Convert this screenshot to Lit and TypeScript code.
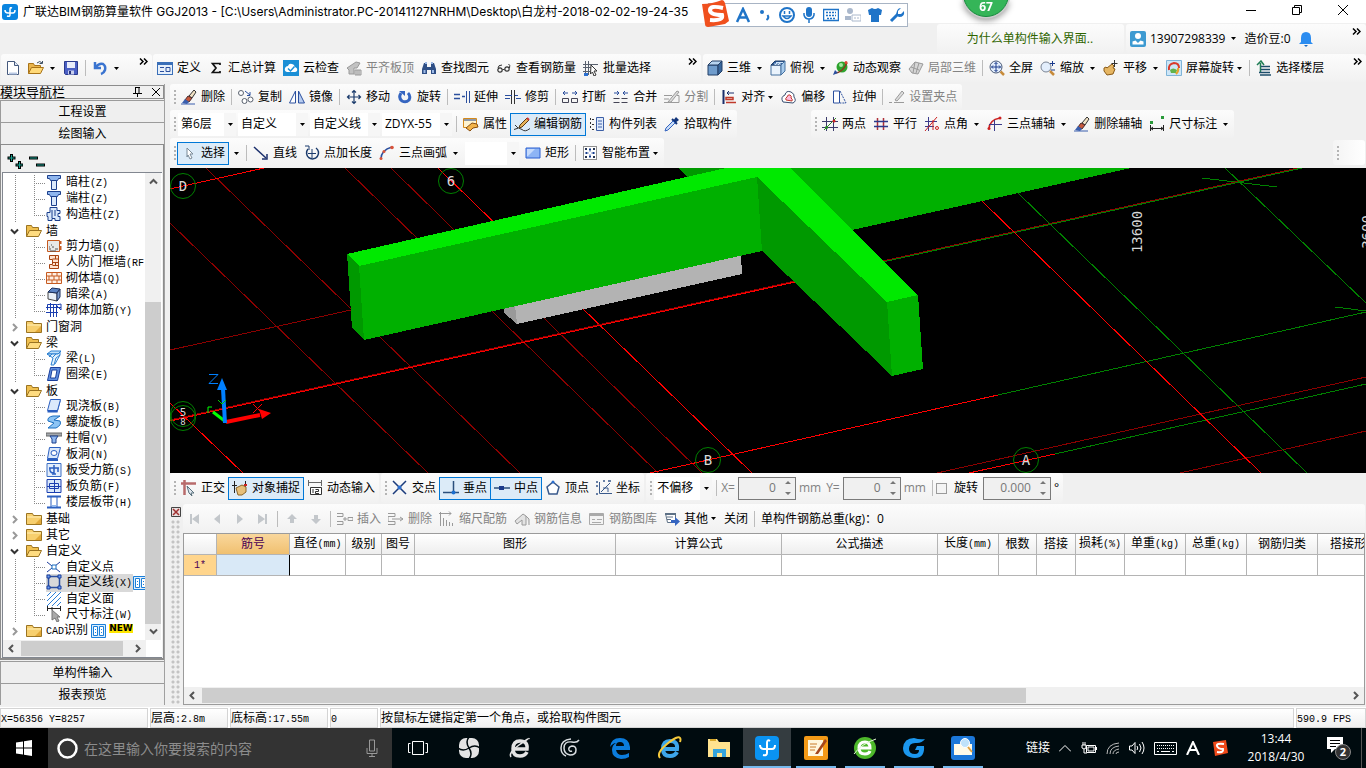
import { LitElement, html, svg, css, nothing } from "lit";
import { customElement } from "lit/decorators.js";
import { classMap } from "lit/directives/class-map.js";

const B = "#2b4f9e";
const G = "#9a9a9a";

const glyphs: Record<string, unknown> = {
  newdoc: svg`<path d="M2.500 1.500h7l4 4v9h-11z" fill="#fff" stroke="#44587c"/><path d="M9.500 1.500v4h4" fill="#dfe8f5" stroke="#44587c"/><path d="M4 13.500h8" stroke="#b9c9e4" stroke-width="2"/>`,
  open: svg`<path d="M.5 13.500v-10h5l1 2h6v3" fill="#e9b44c" stroke="#a87318"/><path d="M.5 13.500l3-6h12l-3 6z" fill="#ffd978" stroke="#a87318"/><path d="M9 3q3-3 5 0M14.500 1v2.500h-3" fill="none" stroke="#3d4f63"/>`,
  save: svg`<path d="M1.500 1.500h13v13h-12l-1-1z" fill="#4a5fc4" stroke="#2b3a8c"/><path d="M4 2h8v6H4z" fill="#e8ecfa"/><path d="M5 10.500h6v4H5z" fill="#c9d0ee"/><path d="M6 11h2v3H6z" fill="#26337c"/>`,
  undo: svg`<path d="M3 2v6h6" fill="none" stroke="#3a74d0" stroke-width="2.500"/><path d="M4 7q3-4 7-3 3 2 2 6-1 3-4 4" fill="none" stroke="#3a74d0" stroke-width="2.500"/>`,
  define: svg`<path d="M0 2h16v13H0z" fill="#3a6fb8"/><path d="M1 5h14v9H1z" fill="#e6effa"/><path d="M3 7.500h4M3 11.500h4M9 7.500h4v4H9z" stroke="#2b4f9e" fill="none"/>`,
  sigma: svg`<path d="M12 5V3.500H4.500L8 8l-3.500 4.500H12V11" fill="none" stroke="#111" stroke-width="1.700"/>`,
  cloud: svg`<path d="M0 0h16v16H0z" fill="#1b8fd6"/><path d="M4 12q-3-1-2-4 1-2 3-2 1-3 4-2 2 0 3 3 3 1 2 4-1 1-2 1z" fill="#fff"/><path d="M5 8.500l2.500 2.500 4-4.500" stroke="#1b8fd6" stroke-width="1.500" fill="none"/>`,
  slab: svg`<path d="M1 8l9-6 4 1-3 5H8v6H3v-4z" fill="#c2c2c2" stroke="${G}"/><path d="M9 10h6v5H9zM11 10v5M13 10v5" fill="#ddd" stroke="${G}"/>`,
  bino: svg`<path d="M3 3h3v4h4V3h3l2 6v5h-5v-4H6v4H1V9z" fill="#2f4f86"/><path d="M2.500 10h2v3h-2zM11 10h2v3h-2zM4 2h2v2H4zM10 2h2v2h-2z" fill="#9db9e6"/>`,
  glasses: svg`<circle cx="4" cy="10" r="2.200" fill="none" stroke="#333" stroke-width="1.200"/><circle cx="11" cy="9" r="2.200" fill="none" stroke="#333" stroke-width="1.200"/><path d="M6.500 9.500h2M2 8q0-3 4-3M13.500 8q1-3-1-4" fill="none" stroke="#333"/>`,
  batch: svg`<path d="M2.500 1v14M5.500 1v14M0 4.500h15M0 7.500h8M0 11.500h7" stroke="#59616e" fill="none"/><path d="M1 13h4v3H1z" fill="#2b6fd0"/><path d="M8 5l6 6h-3l2 4-2 1-1.500-4-2 2z" fill="#fff" stroke="#333"/>`,
  cube: svg`<path d="M1 5h10v10H1z" fill="#6f9ccc" stroke="#223f66"/><path d="M1 5l4-4h10l-4 4z" fill="#b7d4f0" stroke="#223f66"/><path d="M11 5l4-4v10l-4 4z" fill="#39679c" stroke="#223f66"/>`,
  cubetop: svg`<path d="M1 5h10v10H1z" fill="#eaf3fc" stroke="#44709f"/><path d="M1 5l4-4h10l-4 4z" fill="#2f5f9e" stroke="#223f66"/><path d="M4 4h7M6 2.500h7M5 5l3-3M8 5l3-3" stroke="#cfe3f7"/><path d="M11 5l4-4v10l-4 4z" fill="#a8cbec" stroke="#44709f"/>`,
  orbit: svg`<circle cx="9" cy="7" r="5.500" fill="#2da32d"/><circle cx="8" cy="5" r="2" fill="#a5e8a0"/><path d="M2 13Q9 13 14 3" fill="none" stroke="#8b3a1a" stroke-width="1.500"/><path d="M0 15l2-5 3 3z" fill="#2b4f9e"/><circle cx="13" cy="2.500" r="1.500" fill="#d43"/>`,
  part3d: svg`<path d="M1 9l6-7 8 2-5 10-6-1z" fill="#d6d6d6" stroke="${G}"/><path d="M3 7l8 3M7 2l-2 11M11 3L8 13" stroke="${G}" fill="none"/>`,
  full: svg`<circle cx="7" cy="7" r="6" fill="#e3eefc" stroke="#4a5a78"/><path d="M7 2.500v9M2.500 7h9M5.500 4L7 2.500 8.500 4M5.500 10L7 11.500 8.500 10M4 5.500L2.500 7 4 8.500M10 5.500L11.500 7 10 8.500" fill="none" stroke="#1b3b8c"/><path d="M11.500 11.500L15 15" stroke="#c78b3b" stroke-width="2.500"/>`,
  zoom: svg`<circle cx="6" cy="7" r="5" fill="#e3eefc" stroke="#7a8494"/><path d="M10 11l4 4" stroke="#c78b3b" stroke-width="2.500"/><path d="M10 3.500h5M12.500 1v5M11 10h4" stroke="#1b3b8c"/>`,
  pan: svg`<path d="M1 8l2-1 1 1 5-4 2 2-1 2 2 1-2 5-6 1-3-4z" fill="#e6b663" stroke="#8a5a16"/><path d="M11.500 0v7M8.500 3.500h6" stroke="#333"/>`,
  rotscr: svg`<path d="M.5.5h15v15H.5z" fill="#cde6f7" stroke="#7fb4d8"/><path d="M3 10q-1-6 5-7 5 0 5 5" stroke="#d93a2b" stroke-width="2" fill="none"/><path d="M4 10q3-3 7 0l-1 3H5z" fill="#62b34a"/><path d="M12 8q1 3-2 6" stroke="#e8a22a" stroke-width="2" fill="none"/>`,
  floors: svg`<path d="M1 5l4-4 3 4M4.500 3v10" fill="none" stroke="#1f7d55" stroke-width="1.500"/><path d="M5 6.500h9M5 9.500h9M3 12.500h11M4 15h11" stroke="#1d4d6b" stroke-width="1.500"/>`,
  erase: svg`<path d="M8 7l5-6 2 2-4 6z" fill="#f2e2c4" stroke="#333"/><path d="M4 11l3-4 4 2-3 4z" fill="#c7583c" stroke="#4a2c2c"/><path d="M1 14l3-4 4 3-2 2z" fill="#3a5fae"/><path d="M0 15h14" stroke="#3a5fae"/>`,
  copy: svg`<circle cx="3" cy="4" r="2.500" fill="#fff" stroke="#59616e"/><circle cx="6.500" cy="12" r="2.500" fill="#fff" stroke="#59616e"/><circle cx="12.500" cy="10.500" r="2.500" fill="#fff" stroke="#59616e"/><path d="M7 2l5 4M12 3v3.500H9" stroke="${B}" fill="none"/>`,
  mirror: svg`<path d="M6.500 2v12h-6z" fill="#fff" stroke="${B}"/><path d="M9.500 2v12h6z" fill="#b8cdf0" stroke="${B}"/>`,
  move: svg`<path d="M8 2v12M2 8h12M6 3.500l2-2 2 2M6 12.500l2 2 2-2M3.500 6l-2 2 2 2M12.500 6l2 2-2 2" fill="none" stroke="#1b3b6c" stroke-width="1.200"/>`,
  rotate: svg`<path d="M4 4q-3 5 1 8 4 2 7-1 2-4-1-7" fill="none" stroke="#3565c0" stroke-width="3"/><path d="M2 2h6v5z" fill="#3565c0"/>`,
  extend: svg`<path d="M0 5.500h6M0 9.500h6M8 7.500h3" stroke="${B}" stroke-width="1.500"/><path d="M12.500 2v12M15.500 2v12" stroke="${B}"/>`,
  trim: svg`<path d="M6.500 1v14M9.500 1v14" stroke="#333"/><path d="M0 6.500h7M0 9.500h5M10 6.500h3M11 9.500h5" stroke="${B}"/>`,
  brk: svg`<path d="M1 4h5M10 4h5M3 2L1 4l2 2M13 2l2 2-2 2" stroke="${B}" fill="none"/><path d="M.5 9.500h6v4h-6zM9.500 9.500h6v4h-6z" fill="none" stroke="#445"/>`,
  merge: svg`<path d="M1 4h5M10 4h5M4 2l2 2-2 2M12 2l-2 2 2 2" stroke="${B}" fill="none"/><path d="M.5 9.500h15M.5 13.500h15" fill="none" stroke="#445" stroke-dasharray="6 2"/>`,
  split: svg`<path d="M0 6.500h8M0 13.500h15V6.500h-2M0 10h5" fill="none" stroke="${G}"/><path d="M4 13L13 2l2 1L7 13z" fill="#ddd" stroke="${G}"/>`,
  align: svg`<path d="M2.500 1v14" stroke="#1b2f6c" stroke-width="2"/><path d="M6 4h7M8 2L6 4l2 2" fill="none" stroke="#1b2f6c"/><path d="M5 8.500h7v2H5zM5 13.500h10" fill="none" stroke="#c0392b" stroke-width="1.500"/>`,
  offset: svg`<path d="M2 13q-3-5 2-7 1-5 6-3 4 2 3 5 3 4-1 6z" fill="#fff" stroke="#394e70"/><path d="M5 11q-1-2 1-3 1-3 3-2 2 1 1 3 2 1 1 3z" fill="#fbd" stroke="#c0392b"/>`,
  stretch: svg`<path d="M1.500 2h6v12h-6z" fill="#fff" stroke="${B}"/><path d="M8 2l6 12H8" fill="none" stroke="${B}" stroke-dasharray="2 1"/>`,
  grip: svg`<path d="M0 13.500h3M5 13.500h10" stroke="${G}"/><path d="M6 11l7-9 2 2-7 8z" fill="#ddd" stroke="${G}"/>`,
  prop: svg`<path d="M.5 2.500h13v9H.5z" fill="#fff4d0" stroke="#d58a1c"/><path d="M1 3h12v2H1z" fill="#8d98a8"/><path d="M3 12l6-5 5 1 1 3-5 1-3 3z" fill="#f3b44a" stroke="#8a4f10"/>`,
  pencil: svg`<path d="M0 13.500q5-3 8 0t8-1" fill="none" stroke="#333"/><path d="M1 9l3 3" stroke="#333"/><path d="M6 9l7-7 2 2-7 7-3 1z" fill="#e8b35a" stroke="#5a3b12"/><path d="M13 2l2 2" stroke="#c33" stroke-width="2"/>`,
  list: svg`<path d="M1.500 2v12" stroke="#333" stroke-dasharray="2 2"/><path d="M3 3.500h2M3 8.500h2M3 13.500h2" stroke="#333"/><path d="M7.500 1.500h7v13h-7z" fill="#dfeafb" stroke="#3c5fa6"/><path d="M9 5h4M9 8h4M9 11h4" stroke="#3c5fa6"/>`,
  picker: svg`<path d="M9 5l3-4 3 3-4 3z" fill="#12357a"/><path d="M8 3l5 5" stroke="#12357a" stroke-width="2"/><path d="M9 5L2 12l-1 3 3-1 7-7z" fill="#c9ddf8" stroke="#3565c0"/>`,
  twopt: svg`<path d="M4.500 1v14M11.500 1v14M0 5.500h16M0 11.500h16" stroke="#3b3b6b"/><path d="M2 14L14 2" stroke="#2a8a2a"/><circle cx="4.500" cy="11.500" r="1.500" fill="#2a8a2a"/><circle cx="12" cy="5" r="1.500" fill="#c22"/>`,
  parallel: svg`<path d="M4.500 2v12M10.500 2v12" stroke="#b0303a" stroke-width="1.500"/><path d="M1 5.500h14M1 10.500h14" stroke="#2b3a8c" stroke-width="1.500"/>`,
  ptangle: svg`<path d="M4.500 1v14M1 5.500h12M1 10.500h9" stroke="#3b3b8b"/><path d="M1 15L13 1M9 4v10" stroke="#c22"/><circle cx="13" cy="12" r="1.500" fill="none" stroke="#c22"/>`,
  threept: svg`<path d="M2 13q0-9 11-11" stroke="#c22" fill="none" stroke-width="1.500"/><path d="M7.500 4v11M2 8.500h13" stroke="#3b3b8b"/><circle cx="13" cy="2" r="1.500" fill="#c22"/><circle cx="2" cy="12.500" r="1.500" fill="#c22"/>`,
  dim: svg`<path d="M1.500 9v6M14.500 9v6M2 12.500h12M4 11l-2 1.500L4 14M12 11l2 1.500-2 1.500" stroke="#222" fill="none"/><path d="M1 5h3v3H1zM12 0h3v3h-3z" fill="#2a9a3a"/>`,
  arrow: svg`<path d="M6 3l6 6H9l2 4-2 1-2-4-1 2z" fill="#fff" stroke="#7a8a98"/>`,
  line: svg`<path d="M1 2l12 11" stroke="#1b2f6c" stroke-width="1.500"/><path d="M14 9v5H9" fill="none" stroke="#1b2f6c" stroke-width="1.500"/>`,
  ptlen: svg`<path d="M4 4a6 6 0 1 0 8-1" fill="none" stroke="#1b3b6c" stroke-width="1.500"/><path d="M1 1h4v4M8 4v9M4 8.500h8" fill="none" stroke="#1b3b6c"/>`,
  arc: svg`<path d="M2 14q0-9 11-12" stroke="#2b4f9e" fill="none" stroke-width="1.500"/><circle cx="13" cy="2.500" r="1.800" fill="#d8533a"/><circle cx="5" cy="6.500" r="1.500" fill="#d8533a"/><circle cx="2" cy="13.500" r="1.500" fill="#d8533a"/>`,
  rect: svg`<path d="M1 3h14v10H1z" fill="#8db4f5" stroke="#2b5fd0"/><path d="M2 4h8L3 11H2z" fill="#c5dafc"/>`,
  smart: svg`<path d="M1.500 1.500h13v13h-13z" fill="#fff" stroke="#222" stroke-dasharray="1 1"/><path d="M8 3v3.500M8 9.500V13M3 8h3.500M9.500 8H13M7 4.500h2M7 11.500h2M4.500 7v2M11.500 7v2" stroke="#123a8c"/><path d="M3 3h2v2H3zM11 3h2v2h-2zM3 11h2v2H3zM11 11h2v2h-2z" fill="#24324f"/>`,
  ortho: svg`<path d="M0 3.500h15M3.500 0v15" stroke="#b86b6b" stroke-width="2.500"/><path d="M6 6l7 7h-3l1 3-3-3z" fill="#dfe6ee" stroke="#59707c"/>`,
  snap: svg`<path d="M0 5.500h5M2.500 1v12M13.500 1v7" stroke="#222"/><path d="M4 8l6-3 4 2v5l-4 3H6z" fill="#e6bf7a" stroke="#8a6427"/><path d="M12 5h3" stroke="#c22" stroke-width="2"/>`,
  dyn: svg`<path d="M1 2.500h13M1.500 0v6M14.500 0v6" stroke="#666"/><path d="M3.500 7.500h11v7h-11z" fill="#fff" stroke="#333"/><path d="M6 9v4M8.500 9.500h3v2h-3v2h3.500" stroke="#333" fill="none"/>`,
  cross: svg`<path d="M1 1l13 13M14 1L1 14" stroke="#1b3b7c" stroke-width="1.500"/><circle cx="7.500" cy="7.500" r="2" fill="#2b6fd0"/>`,
  perp: svg`<path d="M10.500 1v11M0 12.500h16" stroke="#2b4f7c" stroke-width="1.500"/><circle cx="10.500" cy="12.500" r="2" fill="#1b6fd0"/>`,
  mid: svg`<path d="M0 8h16" stroke="#2b4f7c" stroke-width="1.500"/><path d="M5 6h5v4H5z" fill="#1b3b8c"/>`,
  vertex: svg`<path d="M8 2l6 5-2 7H4L2 7z" fill="#fff" stroke="#3a5a8c" stroke-width="1.500"/><circle cx="8" cy="2" r="1.500" fill="#2b6fd0"/>`,
  coord: svg`<path d="M3.500 2v11.500H16M5 12l9-9M7 8h5v4" fill="none" stroke="#3a5a8c"/><path d="M0 2h2M0 6h2M0 14h2M7 1h2M12 1h3" stroke="#3a5a8c" stroke-width="1.500"/>`,
  first: svg`<path d="M4 3h2v10H4zM13 3v10L6 8z" fill="#c3c7cb"/>`,
  prev: svg`<path d="M11 3v10L5 8z" fill="#c3c7cb"/>`,
  next: svg`<path d="M5 3v10l6-5z" fill="#c3c7cb"/>`,
  last: svg`<path d="M10 3h2v10h-2zM3 3v10l7-5z" fill="#c3c7cb"/>`,
  up: svg`<path d="M8 3l5 5h-3v4H6V8H3z" fill="#c3c7cb"/>`,
  down: svg`<path d="M8 13l5-5h-3V4H6v4H3z" fill="#c3c7cb"/>`,
  insrow: svg`<path d="M0 2.500h6v3H0M0 10.500h6v3H0M6 8h4M8 6v4M11 6.500h5v3h-5z" fill="none" stroke="${G}"/>`,
  delrow: svg`<path d="M0 2.500h7v3H0M0 10.500h7v3H0M0 5.500v5M4 8h11M12 6l3 2-3 2" fill="none" stroke="${G}"/>`,
  scale: svg`<path d="M1.500 1v14M0 2.500h12M10 .5l2 2-2 2" fill="none" stroke="${G}"/><path d="M4.500 7v8M7.500 9v6M10.500 11v4M13.500 12v3" stroke="${G}"/>`,
  info: svg`<path d="M1 10l8-7 3 2v9H8V9L3 13zM12 5l3 3v6" fill="#e3e3e3" stroke="${G}"/>`,
  lib: svg`<path d="M.5 2.500h14v11H.5z" fill="#f3f3f3" stroke="#aaa"/><path d="M1 4h13" stroke="#aaa" stroke-width="2"/><path d="M3 8.500h3M8 8.500h5M3 11.500h9" stroke="#aaa"/>`,
  other: svg`<path d="M1.500 2.500h10v9h-8z" fill="#fff" stroke="#5e7186"/><path d="M1 3h11" stroke="#5e7186" stroke-width="2"/><path d="M3 6h6M3 8.500h4" stroke="#5e7186"/><path d="M7 9h4V6l5 4.500L11 15v-3H7z" fill="#3565c0"/>`,
  user: svg`<rect width="16" height="16" rx="2" fill="#3d9ad1"/><circle cx="8" cy="5" r="3" fill="#fff"/><path d="M2.500 13.500v-3l3-1L8 12l2.500-2.500 3 1v3z" fill="#fff"/>`,
  bell: svg`<path d="M8 1q5 0 5 6v4l2 2H1l2-2V7q0-6 5-6z" fill="#2b8cf0"/><path d="M6 14h4l-2 2z" fill="#1769c4"/>`,
  folder: svg`<path d="M.5 13.500v-11h6l1 2h8v9z" fill="#f7cf6e" stroke="#9b7422"/><path d="M1 6h14" stroke="#fff0b8"/><path d="M9 13l6-6v6z" fill="#e2a93a"/>`,
  folderopen: svg`<path d="M.5 13.500v-11h5l1 2h6v3" fill="#f0c050" stroke="#9b7422"/><path d="M.5 13.500l3-6h12l-3 6z" fill="#ffdc80" stroke="#9b7422"/>`,
  col: svg`<path d="M1.500 1.500h13v3h-2l-1 2h-7l-1-2h-2z" fill="#8fb6ee" stroke="#1b3f8c"/><path d="M5.500 6.500h5v9h-5z" fill="#dbe9fb" stroke="#1b3f8c"/>`,
  gear: svg`<path d="M4 1.500h7v3h3v3h-2v3h2v4H9v-2H6v2H2v-4H1v-4h3z" fill="#dbe9fb" stroke="#1b3f8c"/><path d="M6 4v8M9 4v6" stroke="#1b3f8c"/>`,
  shear: svg`<path d="M1.500 2.500h12v11h-12z" fill="#e8e8e8" stroke="#c65a20"/><path d="M3 11h2M6 9h2M4 13h6M9 11h3M5 7h1M3 9h1" stroke="#555"/><path d="M14.500 3v3M14.500 8v4" stroke="#c65a20" stroke-width="2"/>`,
  door: svg`<path d="M3.500 1.500h9v13h-9v-4h3v-5h-3z" fill="#ffe3cf" stroke="#a84310"/><path d="M6.500 5h6M7 8.500h5M6.500 11.500h6M9.500 2v3M9.500 9v3" stroke="#a84310"/>`,
  brick: svg`<path d="M.5 2.500h15v11H.5z" fill="#fff0e4" stroke="#c65a20"/><path d="M1 6h14M1 10h14M6 2v4M11 2v4M3 6v4M8 6v4M13 6v4M6 10v4M11 10v4" stroke="#c65a20"/>`,
  hidbeam: svg`<path d="M2 6l9 1v8l-9-2z" fill="#e9f0f8" stroke="#444"/><path d="M2 6l4-4 8 1-3 4z" fill="#5b84c4" stroke="#1b2f5c"/><path d="M11 7l3-4v8l-3 4z" fill="#7b9ccf" stroke="#1b2f5c"/>`,
  rebar: svg`<path d="M1.500 8V2.500h9V8M0 5.500h15M4.500 1v14M0 10.500h12M10.500 3v12M7.500 3v12" stroke="#1b3fb0" fill="none"/><path d="M10 3l5 5V2z" fill="none" stroke="#1b3fb0"/>`,
  beam: svg`<path d="M1 4l4-3h10l-3 3z" fill="#bfe0fa" stroke="#2b7fd0"/><path d="M1 4h11l2-2v3l-4 3-2 7H5l2-7z" fill="#e3f2fd" stroke="#2b7fd0"/><path d="M3 7l3-3M7 7l3-3M9 14l5-9" stroke="#2b7fd0"/>`,
  ring: svg`<path d="M4.500 1.500h10l-3 13h-10z" fill="#5f8fdf" stroke="#1b3f9c"/><path d="M6 4h5l-1.500 8h-5z" fill="#fff" stroke="#1b3f9c"/>`,
  plate: svg`<path d="M4.500 1.500h10l-3 11h-10z" fill="#dbe9fb" stroke="#2b5fc0"/><path d="M1.500 12.500h10l3-11v2l-3 11h-10z" fill="#2b5fc0"/>`,
  spiral: svg`<path d="M14 2H7q-6 1-5 5l6 2-6 5h8q6-3 4-7L8 6z" fill="#8cc4f4" stroke="#1b6fc0"/>`,
  cap: svg`<path d="M0 3h16v3H0z" fill="#a4a9ae" stroke="#666"/><path d="M4 6h8l-2 3v4H6V9z" fill="#8fb6ee" stroke="#1b3f8c"/>`,
  hole: svg`<path d="M3.500 1.500h11l-3 11h-10z" fill="#dbe9fb" stroke="#2b5fc0"/><ellipse cx="8" cy="7" rx="3" ry="2.500" fill="#fff" stroke="#2b5fc0"/><path d="M1 14h11" stroke="#2b5fc0" stroke-width="2"/>`,
  force: svg`<path d="M1 1.500h14v13H1z" fill="#e3eefc" stroke="#3c6fc4"/><path d="M3 6h10M8 3v9M4 6q-1 5 4 5M12 6v4M6 12h4" fill="none" stroke="#2b5fc0" stroke-width="1.500"/>`,
  neg: svg`<path d="M1 1.500h14v13H1z" fill="#dbe9fb" stroke="#1b3fb0"/><path d="M3.500 5.500h9v5h-9zM8.500 2v12M1 8.500h14" fill="none" stroke="#1b3fb0"/>`,
  strip: svg`<path d="M1 2.500h14M1 13.500h14" stroke="#2b5fc0" stroke-width="2"/><path d="M5 3v10M11 3v10" stroke="#2b5fc0"/><path d="M6 11h4v2H6z" fill="#8fb6ee"/>`,
  cpoint: svg`<path d="M1 3l5 4M14 3L9 7M1 13l5-4M14 13L9 9" stroke="#1b3b9c"/><path d="M6 6h4v4H6z" fill="#fff" stroke="#1b6fc0"/>`,
  cline: svg`<path d="M2.500 2.500h11v11h-11z" fill="none" stroke="#2b4fa0" stroke-width="1.500"/><path d="M1 1h3v3H1zM12 1h3v3h-3zM1 12h3v3H1zM12 12h3v3h-3z" fill="#6f9ff0" stroke="#1b3f9c"/>`,
  cface: svg`<path d="M1 5l4-4M1 10l9-9M1 15L15 1M6 15l9-9M11 15l4-4" stroke="#2b7fd8" fill="none"/>`,
  cdim: svg`<path d="M1.500 0v5M14.500 0v5M2 2.500h12M6 1v3" stroke="#222"/><path d="M6 4l8 7h-3l2 4-2 1-2-4-3 2z" fill="#aaa" stroke="#777"/>`,
  video: svg`<path d="M.5 1.500h14v13H.5z" fill="#dceefe" stroke="#1b7fd8"/><path d="M2.500 3.500h4v9h-4zM8.500 3.500h4v9h-4z" fill="#fff" stroke="#1b7fd8"/><path d="M4 6.500h1M10 6.500h1M4 9.500h1M10 9.500h1" stroke="#1b7fd8"/>`,
  plus: svg`<path d="M4.500 1v8M.5 5h8M12.500 8v8M8.500 12h8" stroke="#000" stroke-width="3"/><path d="M4.500 2v6M1.500 5h6M12.500 9v6M9.500 12h6" stroke="#18a090"/>`,
  minus: svg`<path d="M0 5h9M7 12h9" stroke="#000" stroke-width="3"/><path d="M1 5h7M8 12h7" stroke="#18a090"/>`,
};

const icon = (name: string, size = 16) =>
  html`<svg class="ic" width=${size} height=${size} viewBox="0 0 16 16" aria-hidden="true">${glyphs[name]}</svg>`;

const tri = html`<svg class="tri" width="5" height="3" viewBox="0 0 5 3" aria-hidden="true"><path d="M0 0h5L2.500 3z" fill="#000" /></svg>`;
const more = html`<button class="more" aria-label="更多"><svg width="9" height="7" viewBox="0 0 9 7"><path d="M1 .5l3 3-3 3M5 .5l3 3-3 3" fill="none" stroke="#000" stroke-width="1.500" /></svg></button>`;
const sep = html`<i class="sep"></i>`;
const dots = html`<i class="dots"></i>`;

interface Opt { on?: boolean; off?: boolean; drop?: boolean; tight?: boolean }

const tool = (ic: string, label: string, o: Opt = {}) => html`
  <button class=${classMap({ tool: true, on: !!o.on })} ?disabled=${o.off}>
    ${icon(ic)}<span>${label}</span>${o.tight ? html`<span class="dd">${tri}</span>` : nothing}
  </button>${o.drop ? drop(label) : nothing}`;

const drop = (label: string) => html`<button class="dd" aria-label=${label + "选项"}>${tri}</button>`;

const combo = (label: string, value: string, cls = "") => html`
  <span class="combo ${cls}"><select aria-label=${label}><option>${value}</option></select><i>${tri}</i></span>`;

const half = (t: string) =>
  t.split(/([\x20-\x7e]+)/).map((p) => (/^[\x20-\x7e]/.test(p) ? html`<span class="m">${p}</span>` : p));

const chevron = (d: string, c = "#555") =>
  html`<svg width="9" height="9" viewBox="0 0 9 9" aria-hidden="true"><path d=${d} fill="none" stroke=${c} stroke-width="2" /></svg>`;
const UP = "M1 6.500L4.500 3 8 6.500", DOWN = "M1 2.500L4.500 6 8 2.500", LEFT = "M6 1L2.500 4.500 6 8", RIGHT = "M3 1l3.500 3.500L3 8";

type Node = [string, string, ("open" | "shut" | "leaf" | "end")];
const TREE: Node[] = [
  ["暗柱(Z)", "col", "leaf"], ["端柱(Z)", "col", "leaf"], ["构造柱(Z)", "gear", "end"],
  ["墙", "", "open"], ["剪力墙(Q)", "shear", "leaf"], ["人防门框墙(RF", "door", "leaf"], ["砌体墙(Q)", "brick", "leaf"],
  ["暗梁(A)", "hidbeam", "leaf"], ["砌体加筋(Y)", "rebar", "end"],
  ["门窗洞", "", "shut"], ["梁", "", "open"], ["梁(L)", "beam", "leaf"], ["圈梁(E)", "ring", "end"],
  ["板", "", "open"], ["现浇板(B)", "plate", "leaf"], ["螺旋板(B)", "spiral", "leaf"], ["柱帽(V)", "cap", "leaf"],
  ["板洞(N)", "hole", "leaf"], ["板受力筋(S)", "force", "leaf"], ["板负筋(F)", "neg", "leaf"], ["楼层板带(H)", "strip", "end"],
  ["基础", "", "shut"], ["其它", "", "shut"], ["自定义", "", "open"],
  ["自定义点", "cpoint", "leaf"], ["自定义线(X)", "cline", "leaf"], ["自定义面", "cface", "leaf"], ["尺寸标注(W)", "cdim", "end"],
  ["CAD识别", "", "shut"],
];

const COLS: [string, number][] = [
  ["", 33], ["筋号", 73], ["直径(mm)", 56], ["级别", 36], ["图号", 33], ["图形", 201], ["计算公式", 166], ["公式描述", 156],
  ["长度(mm)", 61], ["根数", 38], ["搭接", 39], ["损耗(%)", 49], ["单重(kg)", 61], ["总重(kg)", 61], ["钢筋归类", 71], ["搭接形式", 73],
];

@customElement("app-root")
export class AppRoot extends LitElement {
  static styles = css`
    :host {
      display: flex; flex-direction: column; height: 100vh; min-height: 600px; overflow: hidden; position: relative;
      background: #f0f0f0; color: #000;
      font: 12px/16px "Open Sans", "Noto Sans CJK SC", sans-serif;
    }
    * { box-sizing: border-box; }
    svg { display: block; flex: none; }
    button { font: inherit; color: inherit; background: none; border: 0; padding: 0; white-space: nowrap; }
    button:disabled { color: #838383; }
    i { font-style: normal; }
    .m { font-family: "Liberation Mono", monospace; font-size: 10px; white-space: pre; }

    .title { display: flex; align-items: center; height: 23px; background: #fff; padding-left: 2px; flex: none; }
    .title h1 { font: 12px/16px Inter, "Noto Sans CJK SC", sans-serif; margin: 0 0 0 5px; flex: 1; white-space: nowrap; }
    .win { display: grid; place-items: center; width: 46px; height: 20px; align-self: start; }

    .row { display: flex; flex: none; }
    .r0 { height: 30px; padding-top: 1px; justify-content: flex-end; gap: 2px; }
    .r1 { height: 31px; padding: 1px 0 2px 1px; gap: 1px; }
    .r2 { height: 26px; } .r3 { height: 28px; gap: 74px; } .r4 { height: 30px; justify-content: space-between; }
    .bar {
      display: flex; align-items: center; gap: 7px; padding: 0 5px 0 4px; border-radius: 3px;
      background: linear-gradient(#fcfcfc, #f1f1f1); white-space: nowrap;
    }
    .b1 { width: 151px; } .b2 { width: 548px; } .grow { flex: 1; }
    .b1, .b2, .grow { padding-right: 4px; }
    .b3 { margin-left: 1px; }
    .acct .more, .grow .more, .b1 .more, .b2 .more { margin-left: auto; }
    .hint { width: 187px; justify-content: center; color: #2f6500; }
    .acct { width: 240px; }
    .more { align-self: flex-start; padding-top: 4px; }
    .tool { display: flex; align-items: center; gap: 4px; height: 23px; }
    .on { background: #dcebf8; border: 1px solid #0078d7; padding: 0 3px; margin: 0 -4px; }
    .on + .dd { margin-left: 0; }
    .dd { display: grid; place-items: center; width: 8px; height: 20px; margin-left: -3px; }
    .sep { width: 1px; height: 16px; background: #bcbcbc; margin: 0 -1px; flex: none; }
    .dots { width: 2px; height: 14px; margin-right: -2px; flex: none; background: repeating-linear-gradient(#b4b4b4 0 2px, transparent 2px 4px); }
    .combos { display: flex; gap: 2px; margin: 0 -2px 0 -3px; }
    .combo { display: flex; width: 70px; height: 23px; background: #fff; }
    .combo select { appearance: none; border: 0; background: none; flex: 1; min-width: 0; padding: 0 0 0 3px; font: inherit; color: inherit; }
    .combo i { display: grid; place-items: center; width: 12px; background: #f6f6f6; }
    .c58 { width: 58px; } .c54 { width: 54px; margin: 0 -1px; }

    .body { display: flex; flex: 1; min-height: 0; padding-bottom: 2px; }
    .side { width: 165px; flex: none; display: flex; flex-direction: column; border-right: 1px solid #a0a0a0; }
    .side h2 { display: flex; align-items: center; gap: 10px; margin: 1px 0; height: 14px; font: 13px/14px "Noto Sans CJK SC", sans-serif; border: 1px solid #8c8c8c; border-left: 0; padding-right: 3px; }
    .side h2 span { flex: 1; line-height: 12px; }
    .side .tab { height: 22px; line-height: 20px; border: 1px solid #9b9b9b; border-right: 0; border-bottom: 0; background: #efefef; flex: none; }
    .pane { flex: 1; min-height: 0; border: 1px solid #8c8c8c; border-width: 1px 1px 2px; margin-bottom: 1px; padding: 0 1px; display: flex; flex-direction: column; }
    .pm { display: flex; gap: 6px; height: 27px; padding: 4px 0 0 5px; flex: none; }
    .box { flex: 1; min-height: 0; background: #fff; border: 1px solid #828790; border-right: 0; display: flex; flex-direction: column; }
    .split { flex: 1; display: flex; min-height: 0; }
    .tree { flex: 1; margin: 0; padding: 2px 0 0; list-style: none; overflow: hidden; }
    .tree li { display: flex; height: 16px; align-items: center; white-space: nowrap; }
    .tree li > svg + span, .tree .leaf { display: flex; gap: 4px; }
    .tree .leaf > span { display: block; }
    .tree li > svg:nth-child(2) + span { padding-left: 4px; }
    .tree .leaf.sel { padding-right: 1px; background: #d9d9d9; }
    .exp { width: 23px; padding-left: 7px; }
    .new { font: bold 9px/9px "DejaVu Sans", sans-serif; background: #ffe600; margin: -6px 0 0 2px; }
    .vs { width: 16px; margin-right: 1px; background: #f0f0f0; display: flex; flex-direction: column; align-items: center; justify-content: space-between; padding: 4px 0; }
    .vs i { width: 16px; flex: 1; margin-top: 116px; margin-bottom: 3px; background: #cdcdcd; }
    .hs { display: flex; align-items: center; height: 17px; background: #f0f0f0; padding: 0 4px; flex: none; }
    .hs span { flex: 1; height: 15px; margin: 0 5px; }
    .hs i { display: block; height: 15px; background: #cdcdcd; width: 72%; }
    .tree-hs { margin-right: 16px; }
    .tree-hs i { width: 95%; }

    .main { flex: 1; min-width: 0; display: flex; flex-direction: column; margin-left: 5px; }
    .stub { width: 32px; margin: 2px 1px 3px 0; background: linear-gradient(90deg, #f4f4f4, #fff); }
    .view { display: block; width: 100%; height: 305px; background: #000; }
    .snap { height: 30px; gap: 2px; margin-bottom: 1px; }
    .snap .bar { padding-right: 4px; }
    .num { display: flex; height: 23px; border: 1px solid #7a7a7a; width: 58px; background: #f0f0f0; }
    .num input { border: 0; background: none; flex: 1; min-width: 0; padding: 0; text-align: right; font: inherit; color: #777; }
    .num svg { align-self: center; margin: 0 4px 0 9px; }
    .w68 { width: 68px; margin: 0 -4px 0 -2px; }
    .axis { display: flex; align-items: center; gap: 3px; margin-left: -2px; color: #838383; }
    input[type="checkbox"] { appearance: none; width: 11px; height: 11px; border: 1px solid #9b9b9b; margin: 0; background: #f4f4f4; }
    .chk { display: flex; align-items: center; gap: 7px; margin-left: -3px; }

    .low { flex: 1; min-height: 0; display: flex; }
    .edge { width: 13px; flex: none; padding: 3px 2px 0 1px; }
    .edge svg + i { display: block; height: calc(100% - 14px); margin-top: 3px; background: radial-gradient(circle at 2px 2px, #c4c4c4 1px, transparent 2px) 0 0 / 5px 5px; }
    .grid { flex: 1; min-width: 0; display: flex; flex-direction: column; margin-right: 1px; }
    .cmd { height: 29px; flex: none; padding-left: 3px; }
    .cmd .nav { display: flex; gap: 8px; }
    .cmd .nav:first-child { gap: 7px; }
    .sheet { flex: 1; min-height: 0; background: #fff; border: 1px solid #9b9b9b; overflow: hidden; display: flex; flex-direction: column; }
    .scroll { flex: 1; overflow: hidden; }
    table { border-collapse: separate; border-spacing: 0; table-layout: fixed; width: 1207px; }
    th, td { height: 19px; padding: 0; font-weight: normal; border: solid #b4b4b4; border-width: 0 1px 1px 0; white-space: nowrap; text-align: center; line-height: 18px; }
    thead th { background: linear-gradient(#fff, #eee); height: 20px; }
    thead th.cur { background: linear-gradient(#f9d79c, #f0c070); color: #4b0055; }
    tbody th { background: #ffd58c; color: #4b0055; }
    td.cur { background: #d9e9f7; border-right-color: #000; }

    .status { display: flex; gap: 2px; height: 21px; flex: none; background: #fff; padding-top: 1px; }
    .status > span { border: 1px solid #d4d4d4; background: linear-gradient(#fff, #f0f0f0); line-height: 18px; white-space: nowrap; overflow: hidden; }
    .s148 { width: 148px; } .s78 { width: 78px; } .s98 { width: 98px; } .s48 { width: 48px; } .s70 { width: 70px; }

    .task { display: flex; height: 40px; flex: none; background: #000b0f; color: #fff; }
    .task button { display: grid; place-items: center; width: 49px; }
    .task .start { width: 48px; background: #000; }
    .search { display: flex; align-items: center; width: 344px; background: #333; padding: 0 14px 0 8px; gap: 5px; }
    .search input { flex: 1; min-width: 0; background: none; border: 0; padding: 0; font: 14px/20px "Noto Sans CJK SC", sans-serif; }
    .search input::placeholder { color: #8c8c8c; opacity: 1; }
    .task .n { width: 51px; }
    .task .act { width: 48px; }
    .run { background: linear-gradient(#76b9ed, #76b9ed) center bottom / 40px 2px no-repeat; }
    .task .act.run { background: linear-gradient(#76b9ed, #76b9ed) center bottom / 48px 2px no-repeat #343c40; }
    .tray { display: flex; align-items: center; margin-left: auto; }
    .tray > span { margin-right: 3px; }
    .task .tray button { width: 24px; height: 40px; }
    .task .tray .kb { width: 32px; }
    .task .tray .wide { width: 30px; }
    .clock { width: 82px; text-align: center; line-height: 18px; }
    .task .tray .note { width: 44px; }
    .desk { height: 40px; width: 5px; border-left: 1px solid #555; }

    .ime { position: absolute; left: 701px; top: 0; display: flex; align-items: center; height: 28px; }
    .ime .pad { display: flex; align-items: center; gap: 6px; height: 24px; width: 200px; background: #fff; border: 1px solid #a8b4c4; margin: 2px 0 0 -21px; padding-left: 26px; }
    .ime .logo { z-index: 1; }
    .ball { position: absolute; left: 960px; top: 0; filter: drop-shadow(0 2px 3px #0006); }
  `;

  private scene() {
    const D = "#8b0000", R = "#f00", N = "#008000";
    const L: [number, number, number, number, string][] = [
      [206, 168, 520, 473, D], [170, 223, 428, 473, D], [345, 168, 658, 473, D], [391, 168, 702, 473, D],
      [438, 168, 752, 473, R], [170, 403, 243, 473, R], [170, 189, 264, 168, R], [170, 350, 351, 310, D],
      [170, 420, 795, 281, D], [170, 421, 795, 282, R], [883, 261, 1302, 167, D], [883, 262, 1302, 168, N],
      [650, 473, 998, 395, R], [998, 395, 1366, 312, N], [937, 473, 1366, 377, D], [969, 473, 1055, 454, R],
      [1055, 454, 1366, 384, N], [1180, 473, 1366, 431, D], [982, 201, 1261, 473, R], [1018, 193, 1307, 473, N],
      [1225, 168, 1366, 303, N], [1202, 178, 1277, 187, N], [1335, 307, 1366, 311, N],
    ];
    const C: [number, number, string][] = [[183, 186, "D"], [451, 181, "6"], [183, 414, ""], [183, 418, ""], [708, 460, "B"], [1026, 460, "A"]];
    return html`<svg class="view" viewBox="170 168 1196 305" preserveAspectRatio="xMinYMin slice" role="img" aria-label="三维视图">
      <g shape-rendering="crispEdges">
        ${L.map(([a, b, c, d, s]) => svg`<path d="M${a} ${b}L${c} ${d}" stroke=${s} />`)}
        <path d="M678 168h60l-50 10z" fill="#009900" />
        <path d="M504 308l11-3 226-50 1 19-225 50-13-11z" fill="#b3b3b3" />
        <path d="M504 308l11-3 2 19-13-11z" fill="#999" />
        <path d="M788 168h343L852 230z" fill="#00b000" />
        <path d="M347 254L726 168h64L918 295l-31 7L757 177 359 266z" fill="#00e900" />
        <path d="M359 266l398-89 5 74-398 89z" fill="#00b000" />
        <path d="M347 254l12 12 5 74-12-12zM757 177l130 125 5 74-130-125z" fill="#009900" />
        <path d="M887 302l31-7 5 74-31 7z" fill="#00b000" />
      </g>
      <g font-family="DejaVu Sans Mono, monospace" font-size="14" fill="#d8d8d8" text-anchor="middle">
        ${C.map(([x, y, t]) => svg`<circle cx=${x} cy=${y} r="12.500" fill="none" stroke=${N} />${t ? svg`<text x=${x} y=${y + 5}>${t}</text>` : nothing}`)}
        <text x="183" y="416" font-size="11">5</text>
        <text x="183" y="425" font-size="9">8</text>
        <text transform="translate(1142 232) rotate(-90)">13600</text>
        <text transform="translate(1372 232) rotate(-90)">3600</text>
      </g>
      <path d="M226 422L213 412" stroke="#0f0" stroke-width="3" /><path d="M208 413v-6h4" stroke="#0f0" fill="none" />
      <path d="M226 422l34-7" stroke="#f00" stroke-width="4" /><path d="M271 413l-12-4 3 10z" fill="#f00" />
      <path d="M225 423l-2-34" stroke="#0080ff" stroke-width="4" /><path d="M222 378l-5 12h10z" fill="#0080ff" />
      <path d="M209 374.500h9l-9 9h9" stroke="#0080ff" fill="none" /><path d="M253 404l9 9M262 404l-9 9" stroke="#f00" /><path d="M218 400l4 4 4-4" stroke="#0c0" fill="none" />
    </svg>`;
  }

  private node([t, ic, k]: Node) {
    if (k === "open" || k === "shut")
      return html`<li><button class="exp" aria-label=${t}>${k === "open" ? chevron(DOWN, "#333") : chevron(RIGHT, "#999")}</button>${icon(k === "open" ? "folderopen" : "folder")}<span>${t === "CAD识别" ? html`<span>${half(t)}</span>` : half(t)}</span>
        ${t === "CAD识别" ? html`&nbsp;${icon("video")}<b class="new">NEW</b>` : nothing}</li>`;
    const sel = ic === "cline";
    return html`<li><svg width="43" height="16" viewBox="0 0 43 16" aria-hidden="true"><path d=${`M12.5 0v16M31.5 0v${k === "end" ? 8 : 16}M31 8.500h11`} stroke="#888" stroke-dasharray="1 1" fill="none" shape-rendering="crispEdges" /></svg><span class=${sel ? "leaf sel" : "leaf"}>${icon(ic)}<span>${half(t)}</span></span>${sel ? icon("video") : nothing}</li>`;
  }

  private num(label: string, v: string, cls = "") {
    return html`<span class="num ${cls}"><input type="text" aria-label=${label} .value=${v} /><svg width="6" height="16" viewBox="0 0 6 16"><path d="M0 4l3-3 3 3zM0 12l3 3 3-3z" fill="#777" /></svg></span>`;
  }

  private apps() {
    const s = (b: unknown) => html`<svg width="24" height="24" viewBox="0 0 24 24" aria-hidden="true">${b}</svg>`;
    return html`
      <button class="n" aria-label="风扇">${s(svg`<rect x="2" y="2" width="20" height="20" rx="7" fill="#e4e4e4"/><path d="M12 1q-4 5 0 11t0 11M1 12q5 4 11 0t11 0" stroke="#000b0f" stroke-width="1.500" fill="none"/>`)}</button>
      <button class="n" aria-label="浏览器">${s(svg`<path d="M4 13h15q1-8-7-8-7 0-7 8 0 7 7 7 5 0 7-4" fill="none" stroke="#e4e4e4" stroke-width="3.500"/><path d="M3 21q-3-4 8-12T21 3" fill="none" stroke="#e4e4e4" stroke-width="1.500"/>`)}</button>
      <button aria-label="广联达">${s(svg`<path d="M21 4q-2 3-7 2-8-1-8 6 0 6 6 7 6 0 6-5 0-4-4-4-4 1-3 4 1 2 3 1M8 20q-5-2-5-8 0-8 10-9" fill="none" stroke="#d8dde0" stroke-width="1.500"/>`)}</button>
      <button class="n" aria-label="Edge">${s(svg`<path d="M2 11q1-9 10-9 9 0 10 9v3H8q1 5 6 5 4 0 7-2v4q-3 2-8 2-9-1-9-9 0-5 4-7-3 0-6 4zM8 10h8q0-4-4-4t-4 4z" fill="#0b7cdc"/>`)}</button>
      <button aria-label="IE">${s(svg`<path d="M5 13h14q1-8-7-8-7 0-7 8 0 7 7 7 5 0 7-4" fill="none" stroke="#3da5ea" stroke-width="4"/><path d="M2 22q-4-5 7-14T22 2q1 1 0 4" fill="none" stroke="#f5c93b" stroke-width="2"/>`)}</button>
      <button aria-label="文件">${s(svg`<path d="M1 3h9l2 3h11v15H1z" fill="#ffe38f"/><path d="M3 3h6v2H3z" fill="#d9a92b"/><path d="M6 21v-8h13v8h-4v-4h-5v4z" fill="#34a3dc"/>`)}</button>
      <button class="act run" aria-label="GGJ">${s(svg`<rect width="24" height="24" rx="4" fill="#0a93f2"/><path d="M15 5q-3-2-3 2v10q0 3-4 2M5 9q0 4 4 4h8q3 0 3-4" fill="none" stroke="#fff" stroke-width="2"/>`)}</button>
      <button class="run" aria-label="文档">${s(svg`<rect width="24" height="24" rx="2" fill="#f39a17"/><path d="M4 4h15v16H4z" fill="#fff7dc"/><path d="M6 8h7M6 11h6M6 14h5" stroke="#c87a2a"/><path d="M11 18L21 3l2 2-9 13z" fill="#a5461c"/>`)}</button>
      <button class="run" aria-label="360">${s(svg`<circle cx="12" cy="12" r="11" fill="#4db82b"/><path d="M7 12h10q0-6-5-6-6 0-6 6 0 6 6 6 4 0 5-3" fill="none" stroke="#fff" stroke-width="3"/><path d="M1 18Q8 8 23 3" stroke="#e5f6d8" fill="none"/>`)}</button>
      <button class="run" aria-label="广联达云">${s(svg`<path d="M23 3q-3 4-8 4-8-1-8 6 0 5 6 5 4 0 4-4h-4l2-4h7q1 12-9 12Q1 21 1 12 2 2 12 2q6 2 11 1z" fill="#1b97ee"/>`)}</button>
      <button class="run" aria-label="阅读">${s(svg`<rect width="24" height="24" rx="3" fill="#1b77d8"/><path d="M3 8h9v11H3zM12 8h9v11h-9z" fill="#fffbe8"/><circle cx="14" cy="7" r="4.500" fill="#bfe2fa" stroke="#fff"/><path d="M17 11l4 5" stroke="#e0a040" stroke-width="2"/>`)}</button>`;
  }

  render() {
    return html`
      <header class="title">
        <svg width="16" height="16" viewBox="0 0 16 16" aria-hidden="true"><rect width="16" height="16" rx="3" fill="#0a85e0" /><path d="M10 4Q8 3 8 5v6q0 2-3 1M3 6q0 3 3 3h5q2 0 2-3" fill="none" stroke="#fff" stroke-width="1.500" /></svg>
        <h1>广联达BIM钢筋算量软件 GGJ2013 - [C:\\Users\\Administrator.PC-20141127NRHM\\Desktop\\白龙村-2018-02-02-19-24-35</h1>
        <button class="win" aria-label="最小化"><svg width="10" height="10"><path d="M0 5.500h10" stroke="#000" /></svg></button>
        <button class="win" aria-label="还原"><svg width="10" height="10"><path d="M.5 2.500h7v7h-7zM2.500 2.500v-2h7v7h-2" fill="none" stroke="#000" /></svg></button>
        <button class="win" aria-label="关闭"><svg width="10" height="10"><path d="M0 0l10 10M10 0L0 10" stroke="#000" /></svg></button>
      </header>
      <div class="row r0">
        <div class="bar hint">为什么单构件输入界面..</div>
        <div class="bar acct"><button class="tool">${icon("user")}<span>13907298339</span></button>${drop("账号")}<span>造价豆:0</span>${icon("bell")}${more}</div>
      </div>
      <div class="row r1">
        <div class="bar b1"><button aria-label="新建">${icon("newdoc")}</button><button aria-label="打开">${icon("open")}</button>${drop("打开")}<button aria-label="保存">${icon("save")}</button>${sep}<button aria-label="撤销">${icon("undo")}</button>${drop("撤销")}${more}</div>
        <div class="bar b2">${tool("define", "定义")}${tool("sigma", "汇总计算")}${tool("cloud", "云检查")}${tool("slab", "平齐板顶", { off: true })}${tool("bino", "查找图元")}${tool("glasses", "查看钢筋量")}${tool("batch", "批量选择")}${more}</div>
        <div class="bar b3 grow">${tool("cube", "三维", { drop: true })}${tool("cubetop", "俯视", { drop: true })}${tool("orbit", "动态观察")}${tool("part3d", "局部三维", { off: true })}${sep}${tool("full", "全屏")}${tool("zoom", "缩放", { drop: true })}${tool("pan", "平移", { drop: true })}${tool("rotscr", "屏幕旋转", { tight: true })}${sep}${tool("floors", "选择楼层")}${more}</div>
      </div>
      <div class="body">
        <nav class="side">
          <h2><span>模块导航栏</span><svg width="9" height="10" viewBox="0 0 9 10"><path d="M2.500 0v6M6 0v6M2 .5h5M0 6.500h9M4.500 7v3" stroke="#000" fill="none" /></svg><svg width="8" height="8" viewBox="0 0 8 8"><path d="M0 0l8 8M8 0L0 8" stroke="#000" /></svg></h2>
          <button class="tab">工程设置</button><button class="tab">绘图输入</button>
          <div class="pane">
            <div class="pm"><button aria-label="展开">${icon("plus")}</button><button aria-label="折叠">${icon("minus")}</button></div>
            <div class="box">
              <div class="split"><ul class="tree">${TREE.map((n) => this.node(n))}</ul><div class="vs">${chevron(UP)}<i></i>${chevron(DOWN)}</div></div>
              <div class="hs tree-hs">${chevron(LEFT)}<span><i></i></span>${chevron(RIGHT)}</div>
            </div>
          </div>
          <button class="tab">单构件输入</button><button class="tab">报表预览</button>
        </nav>
        <main class="main">
          <div class="row r2"><div class="bar">${dots}${tool("erase", "删除")}${sep}${tool("copy", "复制")}${tool("mirror", "镜像")}${sep}${tool("move", "移动")}${tool("rotate", "旋转")}${sep}${tool("extend", "延伸")}${tool("trim", "修剪")}${sep}${tool("brk", "打断")}${tool("merge", "合并")}${tool("split", "分割", { off: true })}${sep}${tool("align", "对齐", { tight: true })}${tool("offset", "偏移")}${tool("stretch", "拉伸")}${sep}${tool("grip", "设置夹点", { off: true })}</div></div>
          <div class="row r3">
            <div class="bar">${dots}<span class="combos">${combo("楼层", "第6层", "c58")}${combo("类别", "自定义")}${combo("构件类型", "自定义线")}${combo("构件", "ZDYX-55")}</span>${sep}${tool("prop", "属性")}${tool("pencil", "编辑钢筋", { on: true })}${tool("list", "构件列表")}${tool("picker", "拾取构件")}</div>
            <div class="bar">${dots}${tool("twopt", "两点")}${tool("parallel", "平行")}${tool("ptangle", "点角", { drop: true })}${tool("threept", "三点辅轴", { drop: true })}${tool("erase", "删除辅轴")}${tool("dim", "尺寸标注", { drop: true })}</div>
          </div>
          <div class="row r4">
            <div class="bar">${dots}${tool("arrow", "选择", { on: true, drop: true })}${sep}${tool("line", "直线")}${tool("ptlen", "点加长度")}${tool("arc", "三点画弧", { drop: true })}${combo("方式", "", "c54")}${tool("rect", "矩形")}${sep}${tool("smart", "智能布置", { tight: true })}</div>
            <div class="bar stub">${dots}</div>
          </div>
          ${this.scene()}
          <div class="row snap">
            <div class="bar">${dots}${tool("ortho", "正交")}${tool("snap", "对象捕捉", { on: true })}${tool("dyn", "动态输入")}</div>
            <div class="bar">${dots}${tool("cross", "交点")}${tool("perp", "垂点", { on: true })}${tool("mid", "中点", { on: true })}${tool("vertex", "顶点")}${tool("coord", "坐标")}</div>
            <div class="bar">${dots}<span class="combos">${combo("偏移方式", "不偏移", "c58")}</span>${sep}<span class="axis">X=${this.num("X", "0")}mm</span><span class="axis">Y=${this.num("Y", "0")}mm</span>${sep}<label class="chk"><input type="checkbox" />旋转</label>${this.num("旋转角度", "0.000", "w68")}<span>°</span></div>
          </div>
          <div class="low">
            <div class="edge"><svg width="10" height="10" viewBox="0 0 10 10"><path d="M.5.5h9v9h-9z" fill="#e8dede" stroke="#444" /><path d="M2 2l6 6M8 2L2 8" stroke="#a03030" stroke-width="1.500" /></svg><i></i></div>
            <div class="grid">
              <div class="bar cmd"><span class="nav">${["first", "prev", "next", "last"].map((n) => html`<button disabled aria-label=${n}>${icon(n)}</button>`)}</span>${sep}<span class="nav">${["up", "down"].map((n) => html`<button disabled aria-label=${n}>${icon(n)}</button>`)}</span>${sep}${tool("insrow", "插入", { off: true })}${tool("delrow", "删除", { off: true })}${tool("scale", "缩尺配筋", { off: true })}${tool("info", "钢筋信息", { off: true })}${tool("lib", "钢筋图库", { off: true })}${tool("other", "其他", { tight: true })}<button>关闭</button>${sep}<span>单构件钢筋总重(kg)：0</span></div>
              <div class="sheet">
                <div class="scroll"><table>
                  <colgroup>${COLS.map(([, w]) => html`<col style="width:${w}px" />`)}</colgroup>
                  <thead><tr>${COLS.map(([t], i) => html`<th class=${i === 1 ? "cur" : ""}>${half(t)}</th>`)}</tr></thead>
                  <tbody><tr><th>${half("1*")}</th>${COLS.slice(1).map((_, i) => html`<td class=${i === 0 ? "cur" : ""}></td>`)}</tr></tbody>
                </table></div>
                <div class="hs">${chevron(LEFT)}<span><i></i></span>${chevron(RIGHT)}</div>
              </div>
            </div>
          </div>
        </main>
      </div>
      <footer class="status"><span class="s148">${half("X=56356 Y=8257")}</span><span class="s78">层高${half(":2.8m")}</span><span class="s98">底标高${half(":17.55m")}</span><span class="s48">${half("0")}</span><span class="grow">按鼠标左键指定第一个角点，或拾取构件图元</span><span class="s70">${half("590.9 FPS")}</span></footer>
      <div class="task">
        <button class="start" aria-label="开始"><svg width="16" height="16" viewBox="0 0 16 16"><path d="M0 2.500l7-1v6H0zM8 1.300L16 0v7.500H8zM0 8.500h7v6l-7-1zM8 8.500h8V16l-8-1.300z" fill="#fff" /></svg></button>
        <label class="search"><svg width="23" height="23" viewBox="0 0 23 23"><circle cx="11.500" cy="11.500" r="9" fill="none" stroke="#fff" stroke-width="2.500" /></svg><input type="text" placeholder="在这里输入你要搜索的内容" aria-label="搜索" /><svg width="12" height="18" viewBox="0 0 12 18"><path d="M3.500 1h5v11h-5zM1 9v5.500h10V9M6 15v2.500M3 17.500h6" fill="none" stroke="#999" /></svg></label>
        <button class="n" aria-label="任务视图"><svg width="20" height="14" viewBox="0 0 20 14"><path d="M4.500.5h11v13h-11zM2.500 2.500h-2v9h2M17.500 2.500h2v9h-2" fill="none" stroke="#fff" /></svg></button>
        ${this.apps()}
        <div class="tray">
          <span>链接</span>
          <button aria-label="展开"><svg width="12" height="7"><path d="M0 6.500l6-6 6 6" fill="none" stroke="#fff" /></svg></button>
          <button aria-label="电池"><svg width="17" height="12" viewBox="0 0 17 12"><path d="M5.500 3.500h9v7h-9zM7 5h6v4H7zM15.500 5v3M1 3h4v3q-2 2-4 0zM2 0v3M4 0v3M3 7v4h3" fill="none" stroke="#fff" /></svg></button>
          <button aria-label="网络"><svg width="14" height="13" viewBox="0 0 14 13"><path d="M1 12Q1 2 13 1M4 12Q4 5 13 4M7 12Q7 8 13 7M10 12q0-2 3-2" fill="none" stroke="#bbb" /></svg></button>
          <button aria-label="音量"><svg width="16" height="14" viewBox="0 0 16 14"><path d="M.5 5h2.500l3-3.500v11L3 9H.5zM8 5q1.500 2 0 4M10.500 3q3 4 0 8M13 1q4 6 0 12" fill="none" stroke="#fff" /></svg></button>
          <button class="kb" aria-label="键盘"><svg width="23" height="13" viewBox="0 0 23 13"><path d="M.5.5h22v12H.5z" fill="none" stroke="#fff" /><path d="M3 3.500h17M3 6.500h17" stroke="#fff" stroke-dasharray="1 1" /><path d="M3 9.500h2M7 9.500h9M18 9.500h2" stroke="#fff" /></svg></button>
          <button aria-label="输入法"><svg width="14" height="14" viewBox="0 0 14 14"><path d="M1 14L7 1l6 13M3 9h8" fill="none" stroke="#fff" stroke-width="2" /></svg></button>
          <button class="wide" aria-label="搜狗"><svg width="16" height="16" viewBox="0 0 16 16"><path d="M1 2l13-2 2 13-13 3z" fill="#f04a1a" /><path d="M12 4Q4 3 5 6t6 3q1 4-6 3" fill="none" stroke="#fff" stroke-width="2" /></svg></button>
          <div class="clock">13:44<br />2018/4/30</div>
          <button class="note" aria-label="通知"><svg width="26" height="26" viewBox="0 0 26 26"><path d="M1 2h16v12H9l-4 4v-4H1z" fill="#fff" /><path d="M4 5.500h10M4 8.500h10M4 11.500h6" stroke="#000" /><circle cx="17" cy="17" r="7.500" fill="#333" stroke="#888" /><text x="17" y="21" font-size="11" font-weight="bold" fill="#fff" text-anchor="middle">2</text></svg></button>
          <i class="desk"></i>
        </div>
      </div>
      <div class="ime">
        <svg class="logo" width="28" height="28" viewBox="0 0 28 28"><path d="M1 4q10 0 20-4 2 0 3 3l4 18-4 3-17 3q-3 0-3-3z" fill="#f0501e" /><path d="M22 8Q9 5 9 10t12 5q2 6-12 5" fill="none" stroke="#fff" stroke-width="4" /></svg>
        <div class="pad">
          <svg width="16" height="16" viewBox="0 0 16 16"><path d="M2 15L8 2l6 13M4 10.500h8" fill="none" stroke="#1f74c8" stroke-width="2.500" /></svg>
          <svg width="16" height="16" viewBox="0 0 16 16"><circle cx="5" cy="5" r="2" fill="#1f74c8" /><path d="M10.500 8q2 3-1 5" stroke="#1f74c8" stroke-width="2" fill="none" /></svg>
          <svg width="16" height="16" viewBox="0 0 16 16"><circle cx="8" cy="8" r="7" fill="none" stroke="#1f74c8" stroke-width="2" /><path d="M5.500 4v3M10.500 4v3M4 9q4 5 8 0z" stroke="#1f74c8" stroke-width="1.500" fill="none" /></svg>
          <svg width="16" height="16" viewBox="0 0 16 16"><rect x="5" y="0" width="6" height="10" rx="3" fill="#1f74c8" /><path d="M3 6v2q1 4 5 4t5-4V6M8 12v4" fill="none" stroke="#1f74c8" stroke-width="1.500" /></svg>
          <svg width="16" height="16" viewBox="0 0 16 16"><path d="M.5 2.500h15v11H.5z" fill="#fff" stroke="#1f74c8" stroke-width="1.500" /><path d="M3 5.500h10M3 8.500h10M4 11.500h8" stroke="#1f74c8" stroke-dasharray="2 1" stroke-width="1.500" /></svg>
          <svg width="16" height="16" viewBox="0 0 16 16"><circle cx="5" cy="4" r="3" fill="#aab8cc" /><path d="M0 13V9h6v4z" fill="#aab8cc" /><path d="M7 8h9v6H7zM9 11h2M12 11h2" fill="#fff" stroke="#aab8cc" /></svg>
          <svg width="16" height="16" viewBox="0 0 16 16"><path d="M1 3l4-2q3 2 6 0l4 2-1 5h-2v7H4V8H2z" fill="#1f74c8" /></svg>
          <svg width="16" height="16" viewBox="0 0 16 16"><path d="M2 14l7-7" stroke="#1f74c8" stroke-width="3" /><path d="M12 1L9 4v3h3l3-3q1 6-5 6Q6 8 8 4q1-3 4-3z" fill="#1f74c8" /></svg>
        </div>
      </div>
      <svg class="ball" width="52" height="20" viewBox="0 0 52 20"><circle cx="26" cy="-6" r="24.500" fill="#ccc" /><circle cx="26" cy="-6" r="22.500" fill="#35b558" stroke="#178a3d" /><text x="26" y="11" font-family="Open Sans, sans-serif" font-weight="bold" font-size="12" fill="#fff" text-anchor="middle">67</text></svg>
    `;
  }
}
